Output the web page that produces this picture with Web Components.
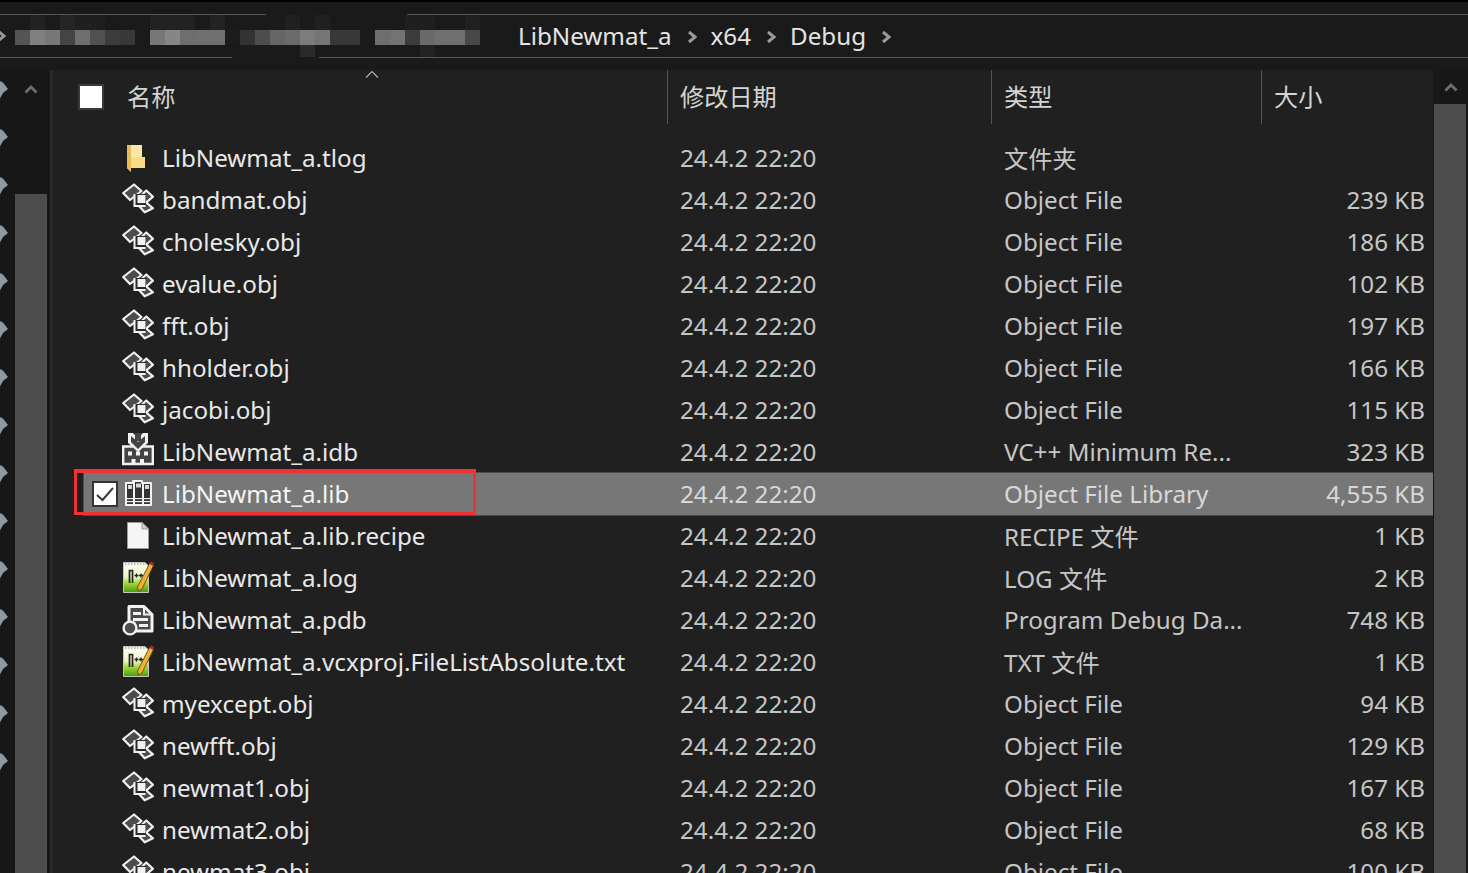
<!DOCTYPE html>
<html lang="zh">
<head>
<meta charset="utf-8">
<title>Debug</title>
<style>
  html, body { margin: 0; height: 100%; background: #1a1a1a; overflow: hidden; }
  body { font-family: "Noto Sans", "Noto Sans CJK SC", sans-serif; font-size: 24.2px; color: #e4e4e4; }
</style>
</head>
<body>
<fe-window>
  <fe-breadcrumb slot="top">
    <span>LibNewmat_a</span><span>x64</span><span>Debug</span>
  </fe-breadcrumb>
  <fe-sidebar slot="left"></fe-sidebar>
  <fe-pane slot="main">
    <fe-header></fe-header>
    <fe-row icon="folder" name="LibNewmat_a.tlog" type="文件夹"></fe-row>
    <fe-row icon="obj" name="bandmat.obj" type="Object File" size="239 KB"></fe-row>
    <fe-row icon="obj" name="cholesky.obj" type="Object File" size="186 KB"></fe-row>
    <fe-row icon="obj" name="evalue.obj" type="Object File" size="102 KB"></fe-row>
    <fe-row icon="obj" name="fft.obj" type="Object File" size="197 KB"></fe-row>
    <fe-row icon="obj" name="hholder.obj" type="Object File" size="166 KB"></fe-row>
    <fe-row icon="obj" name="jacobi.obj" type="Object File" size="115 KB"></fe-row>
    <fe-row icon="idb" name="LibNewmat_a.idb" type="VC++ Minimum Re..." size="323 KB"></fe-row>
    <fe-row icon="lib" name="LibNewmat_a.lib" type="Object File Library" size="4,555 KB" selected></fe-row>
    <fe-row icon="file" name="LibNewmat_a.lib.recipe" type="RECIPE 文件" size="1 KB"></fe-row>
    <fe-row icon="log" name="LibNewmat_a.log" type="LOG 文件" size="2 KB"></fe-row>
    <fe-row icon="pdb" name="LibNewmat_a.pdb" type="Program Debug Da..." size="748 KB"></fe-row>
    <fe-row icon="log" name="LibNewmat_a.vcxproj.FileListAbsolute.txt" type="TXT 文件" size="1 KB"></fe-row>
    <fe-row icon="obj" name="myexcept.obj" type="Object File" size="94 KB"></fe-row>
    <fe-row icon="obj" name="newfft.obj" type="Object File" size="129 KB"></fe-row>
    <fe-row icon="obj" name="newmat1.obj" type="Object File" size="167 KB"></fe-row>
    <fe-row icon="obj" name="newmat2.obj" type="Object File" size="68 KB"></fe-row>
    <fe-row icon="obj" name="newmat3.obj" type="Object File" size="100 KB"></fe-row>
  </fe-pane>
  <fe-scrollbar slot="right" top="34"></fe-scrollbar>
</fe-window>

<script>
const ICONS = {
  folder: `<path d="M5 8H20V20L23 21V31H9V35L5 31Z" fill="#f7d06f"/>
           <path d="M5 8H9V35L5 31Z" fill="#e9bb58"/>
           <path d="M9 8H20V20H9Z" fill="#fce7ab"/>
           <path d="M9 20H23V31H9Z" fill="#fbdc86"/>`,
  obj: `<g stroke="#f2f2f2" stroke-width="2.2" fill="#4c4c4c" stroke-linejoin="round">
          <path d="M24.3 11.5L31 17.7L24.3 23.5L18.5 17Z"/>
          <path d="M24.3 23.5L31 29.3L22.7 33.3L17 27Z"/>
          <path d="M12 5.5L19.5 12L8 21L1.2 14Z"/>
        </g>
        <path d="M11.5 15H23.5V28H11.5Z" fill="#f2f2f2"/>
        <path d="M13.5 15H24V26H13.5Z" fill="#2a2a2a"/>
        <path d="M15.5 16H23.5V24H15.5Z" fill="#f2f2f2"/>`,
  idb: `<path d="M1.2 15.5H30.8V33H1.2Z" fill="#444" stroke="#f2f2f2" stroke-width="2.4"/>
        <path d="M6 2H11L16 7L21 2H26V12L16 21L6 12Z" fill="#f2f2f2"/>
        <path d="M9 5L16 11L23 5V11L16 18L9 11Z" fill="#444"/>
        <path d="M13 2H19V10H13Z" fill="#444"/>
        <g fill="#f2f2f2">
          <rect x="6" y="20.5" width="4" height="4"/><rect x="14" y="20.5" width="4" height="4"/><rect x="22" y="20.5" width="4" height="4"/>
          <rect x="9.5" y="28" width="4" height="4"/><rect x="18" y="28" width="4" height="4"/>
        </g>`,
  lib: `<path d="M4 10H11V8H20V10H29V32H4Z" fill="#333" stroke="#f4f4f4" stroke-width="2" stroke-linejoin="round"/>
        <path d="M12 9V31M21 9V31" stroke="#f4f4f4" stroke-width="2"/>
        <g fill="#d8d8d8">
          <rect x="6" y="12" width="4" height="4"/><rect x="14" y="10.5" width="5" height="4"/><rect x="23" y="12" width="4" height="4"/>
        </g>
        <g fill="#f4f4f4">
          <rect x="5" y="25" width="6" height="1.2"/><rect x="13" y="25" width="7" height="1.2"/><rect x="22" y="25" width="6" height="1.2"/>
          <rect x="5" y="28" width="6" height="1.2"/><rect x="13" y="28" width="7" height="1.2"/><rect x="22" y="28" width="6" height="1.2"/>
        </g>`,
  file: `<path d="M5.5 7.5H20L26.5 14V33.5H5.5Z" fill="#f5f5f5" stroke="#9a9a9a"/>
         <path d="M20 7.5V14H26.5Z" fill="#d0d0d0" stroke="#9a9a9a"/>`,
  log: `<defs><linearGradient id="g" x1="0" y1="0" x2="0" y2="1">
          <stop offset="0" stop-color="#fdfdf8"/><stop offset=".48" stop-color="#eef6c8"/><stop offset=".68" stop-color="#a4d838"/><stop offset="1" stop-color="#4a9a10"/>
        </linearGradient></defs>
        <path d="M1.5 5.5H23L26.5 9V35.5H1.5Z" fill="url(#g)" stroke="#c4c4c4"/>
        <path d="M3 7H23" stroke="#808080" stroke-width="1.2" stroke-dasharray="1.5 1.5"/>
        <path d="M7.5 26V13.5H10.5V26" fill="none" stroke="#222" stroke-width="1.7"/>
        <path d="M12.5 18.5h4M14.5 16.5v4M17 18.5h4M19 16.5v4" stroke="#222" stroke-width="1.4"/>
        <path d="M27.5 6.5L31.5 8.5L20 32L16.5 34L15.5 30Z" fill="#eeb136" stroke="#5c4a14" stroke-width=".9"/>
        <path d="M27.5 6.5L29 4.5L32 6L31.5 8.5Z" fill="#b3262a"/>`,
  pdb: `<path d="M7 7.5H22L30 15.5V32H12V24H7Z" fill="#4a4a4a" stroke="#f2f2f2" stroke-width="3" stroke-linejoin="round"/>
        <path d="M22 8V15.5H29.5" fill="none" stroke="#f2f2f2" stroke-width="2"/>
        <g fill="#f2f2f2"><rect x="11" y="13" width="8" height="3"/><rect x="11" y="19" width="15" height="3"/><rect x="17" y="25" width="9" height="3"/></g>
        <circle cx="8" cy="29" r="6.4" fill="#4c4c4c" stroke="#f2f2f2" stroke-width="2.4"/>`
};

class FeWindow extends HTMLElement {
  constructor() {
    super();
    this.attachShadow({ mode: "open" }).innerHTML = `
      <style>
        :host { display: grid; grid-template-columns: 53px 1380px 35px; grid-template-rows: 70px 803px; height: 873px; overflow: hidden; }
        ::slotted([slot=top]) { grid-column: 1 / -1; }
      </style>
      <slot name="top"></slot><slot name="left"></slot><slot name="main"></slot><slot name="right"></slot>`;
  }
}

// blurred path segments: rows of 15px cells, "" leaves the bar colour
const MOSAIC = [
  ["","#222222","","#252525","#1f1f1f","#1f1f1f","","","","#222222","#222222","#222222","","#232323","","","","","#202020","","#202020","","","","","","#1f1f1f","#1f1f1f","","","#202020",""],
  ["#555555","#808080","#777777","#444444","#6e6e6e","#505050","#3c3c3c","#383838","","#777777","#868686","#6e6e6e","#707070","#707070","#1c1c1c","#333333","#4d4d4d","#666666","#6b6b6b","#7c7c7c","#757575","#383838","#383838","","#6e6e6e","#737373","#3c3c3c","#6a6a6a","#707070","#707070","#484848",""],
  ["","","","","","","","","","","","","","","","","","","","#2a2a2a","","","","","","","","#232323","","","",""]
];

class FeBreadcrumb extends HTMLElement {
  constructor() {
    super();
    const rows = MOSAIC.map((r, i) => `<div class="mrow r${i}">` +
      r.map(c => `<i style="background:${c || "transparent"}"></i>`).join("") + `</div>`).join("");
    this.attachShadow({ mode: "open" }).innerHTML = `
      <style>
        :host { display: flex; flex-direction: column; height: 70px; background: #1a1a1a; border-top: 2px solid #000; box-sizing: border-box; overflow: hidden; }
        .rule { display: flex; height: 1px; justify-content: space-between; }
        .rule i { display: block; background: #555; }
        .a { margin-top: 12px; } .a i:first-child { width: 266px; } .a i:last-child { width: 1061px; }
        .b i:first-child { width: 232px; } .b i:last-child { width: 1149px; }
        .bar { height: 42px; display: flex; align-items: center; }
        .lead { width: 15px; flex: none; margin-left: -6px; padding-right: 6px; display: flex; }
        .mosaic { flex: none; width: 480px; height: 42px; display: flex; flex-direction: column; }
        .mrow { display: flex; height: 15px; flex: none; } .r2 { height: 12px; }
        .mrow i { display: block; width: 15px; flex: none; }
        .crumbs { display: flex; align-items: center; margin-left: 23px; padding-bottom: 2px; }
        ::slotted(span) { display: block; }
      </style>
      <div class="rule a"><i></i><i></i></div>
      <div class="bar">
        <div class="lead"><svg width="14" height="14" viewBox="0 0 14 14"><path d="M4 2L10 7L4 12" fill="none" stroke="#9a9a9a" stroke-width="3"/></svg></div>
        <div class="mosaic">${rows}</div>
        <div class="crumbs"><slot></slot></div>
      </div>
      <div class="rule b"><i></i><i></i></div>`;
  }
  connectedCallback() {
    const chev = () => {
      const s = document.createElementNS("http://www.w3.org/2000/svg", "svg");
      s.setAttribute("width", "12"); s.setAttribute("height", "14"); s.setAttribute("viewBox", "0 0 12 14");
      s.style.cssText = "margin:3px 13px 0 14px;display:block;flex:none";
      s.innerHTML = '<path d="M3 2L9 7L3 12" fill="none" stroke="#9a9a9a" stroke-width="3"/>';
      return s;
    };
    [...this.querySelectorAll("span")].forEach(sp => sp.after(chev()));
  }
}

class FeScrollbar extends HTMLElement {
  constructor() {
    super();
    this.attachShadow({ mode: "open" }).innerHTML = `
      <style>
        :host { display: flex; flex-direction: column; background: #171717; height: 803px; overflow: hidden; }
        .arrow { height: 34px; display: flex; align-items: center; justify-content: center; flex: none; }
        .thumb { flex: 1; background: #4d4d4d; margin: 0 2px 0 1px; }
      </style>
      <div class="arrow"><svg width="14" height="10" viewBox="0 0 14 10"><path d="M1.5 8.5L7 3L12.5 8.5" fill="none" stroke="#6e6e6e" stroke-width="2.8"/></svg></div>
      <div class="thumb"></div>`;
  }
}

class FeSidebar extends HTMLElement {
  constructor() {
    super();
    const pin = `<svg width="9" height="18" viewBox="0 0 9 18"><path d="M0 0L3 1.5L8 8L3 12L0 17.5Z" fill="#8f989d"/></svg>`;
    this.attachShadow({ mode: "open" }).innerHTML = `
      <style>
        :host { display: flex; background: #171717; height: 803px; overflow: hidden; box-sizing: border-box; border-right: 3px solid #2a2a2a; }
        .pins { width: 15px; flex: none; display: flex; flex-direction: column; gap: 30px; padding-top: 11px; box-sizing: border-box; }
        .pins svg { display: block; flex: none; }
        .track { width: 32px; flex: none; display: flex; flex-direction: column; }
        .arrow { height: 40px; display: flex; justify-content: center; padding-top: 14px; box-sizing: content-box; flex: none; }
        .arrow svg { display: block; }
        .thumb { flex: 1; margin-top: 70px; background: #4d4d4d; }
      </style>
      <div class="pins">${pin.repeat(15)}</div>
      <div class="track">
        <div class="arrow"><svg width="14" height="10" viewBox="0 0 14 10"><path d="M1.5 8.5L7 3L12.5 8.5" fill="none" stroke="#6e6e6e" stroke-width="2.8"/></svg></div>
        <div class="thumb"></div>
      </div>`;
  }
}

class FePane extends HTMLElement {
  constructor() {
    super();
    this.attachShadow({ mode: "open" }).innerHTML = `
      <style>:host { display: block; background: #202020; height: 803px; overflow: hidden; }</style><slot></slot>`;
  }
}

class FeHeader extends HTMLElement {
  constructor() {
    super();
    this.attachShadow({ mode: "open" }).innerHTML = `
      <style>
        :host { display: grid; grid-template-columns: 614px 324px 270px 172px; height: 67px; position: relative; color: #d4d4d4; }
        .c { height: 54px; display: flex; align-items: center; box-sizing: border-box; padding-left: 12px; border-left: 1px solid #555; }
        .c span { padding-bottom: 4px; }
        .first { border: 0; padding-left: 25px; }
        .box { width: 26px; height: 26px; box-sizing: border-box; background: #fff; border: 2px solid #3a3a3a; margin-right: 23px; flex: none; }
        .sort { position: absolute; left: 312px; top: 0; }
      </style>
      <div class="c first"><div class="box"></div><span>名称</span></div>
      <div class="c"><span>修改日期</span></div>
      <div class="c"><span>类型</span></div>
      <div class="c"><span>大小</span></div>
      <svg class="sort" width="14" height="9" viewBox="0 0 14 9"><path d="M1 7.5L7 1.5L13 7.5" fill="none" stroke="#b0b0b0" stroke-width="1.2"/></svg>`;
  }
}

class FeRow extends HTMLElement {
  constructor() {
    super();
    this.attachShadow({ mode: "open" }).innerHTML = `
      <style>
        :host { display: grid; grid-template-columns: 583px 324px 270px 172px; height: 42px; margin-left: 31px; align-items: center; position: relative; color: #c6c6c6; }
        :host([selected]) { background: #777; box-shadow: 0 0 0 1px #4d4d4d; }
        .name { display: flex; align-items: center; padding-left: 38px; color: #e8e8e8; white-space: nowrap; }
        :host([selected]) .name { color: #f4f4f4; }
        .name svg { display: block; width: 32px; height: 42px; flex: none; margin-right: 8px; }
        .name span, .date, .type, .size { padding-bottom: 1px; }
        .date, .type { padding-left: 13px; white-space: nowrap; }
        :host([selected]) .date, :host([selected]) .type, :host([selected]) .size { color: #d8d8d8; }
        .size { text-align: right; padding-right: 8px; white-space: nowrap; }
        .check { display: none; position: absolute; left: 8px; top: 8px; width: 26px; height: 26px; box-sizing: border-box; background: #fff; border: 2px solid #333; }
        :host([selected]) .check { display: block; }
        .mark { position: absolute; left: -10px; top: -4px; width: 402px; height: 46px; box-sizing: border-box; border: 3px solid #f03236; border-top-width: 4px; display: none; pointer-events: none; }
        :host([selected]) .mark { display: block; }
      </style>
      <div class="check"><svg width="22" height="22" viewBox="0 0 22 22" style="display:block"><path d="M3 12L8.5 17L19 5" fill="none" stroke="#3a3a3a" stroke-width="2"/></svg></div>
      <div class="name"><svg viewBox="0 0 32 42"></svg><span></span></div>
      <div class="date"></div><div class="type"></div><div class="size"></div>
      <div class="mark"></div>`;
  }
  connectedCallback() {
    const root = this.shadowRoot;
    root.querySelector(".name svg").innerHTML = ICONS[this.getAttribute("icon")] || "";
    root.querySelector(".name span").textContent = this.getAttribute("name");
    root.querySelector(".date").textContent = "24.4.2 22:20";
    root.querySelector(".type").textContent = this.getAttribute("type");
    root.querySelector(".size").textContent = this.getAttribute("size") || "";
  }
}

customElements.define("fe-window", FeWindow);
customElements.define("fe-breadcrumb", FeBreadcrumb);
customElements.define("fe-scrollbar", FeScrollbar);
customElements.define("fe-sidebar", FeSidebar);
customElements.define("fe-pane", FePane);
customElements.define("fe-header", FeHeader);
customElements.define("fe-row", FeRow);
</script>
</body>
</html>
